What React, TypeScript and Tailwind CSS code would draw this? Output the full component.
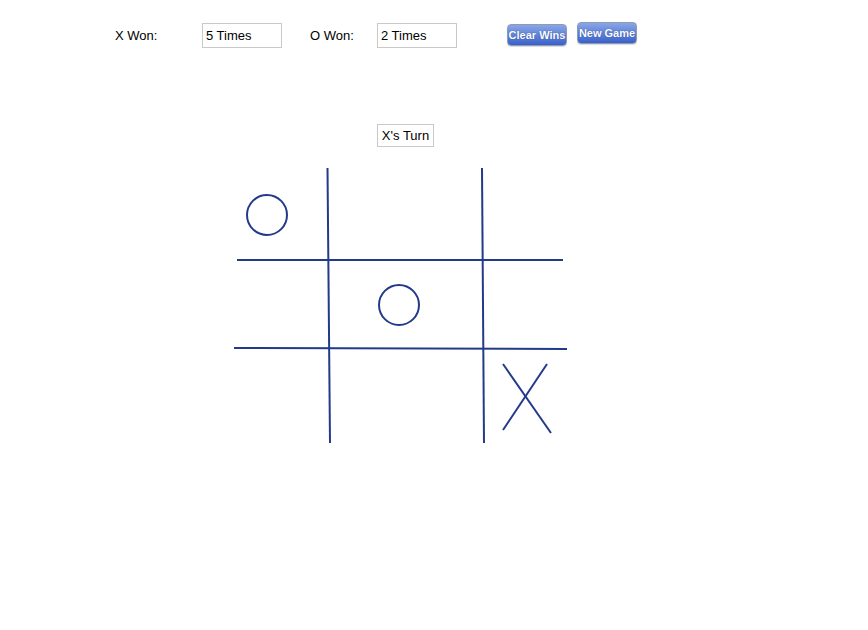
import React from "react";

const ink = "#233a8a";

function Stat({ label, value, labelW }: { label: string; value: string; labelW: string }) {
  return (
    <div className="flex items-center">
      <span className={`${labelW} text-[13px] text-black`}>{label}</span>
      <div className="w-[80px] h-[25px] border border-[#c9c9c9] bg-white pl-[3px] pt-[1px] flex items-center text-[13px] text-black">
        {value}
      </div>
    </div>
  );
}

function Btn({ children, extra }: { children: React.ReactNode; extra: string }) {
  return (
    <button
      className={`w-[60px] h-[22px] rounded-[4px] border border-[#8e9bb5] bg-gradient-to-b from-[#8aa6e6] to-[#3a60c9] text-white text-[11px] font-bold leading-none [text-shadow:0_0_1px_rgba(20,40,120,0.8)] shadow-[0_1px_1px_rgba(0,0,0,0.15)] ${extra}`}
    >
      {children}
    </button>
  );
}

export default function App() {
  return (
    <div className="w-[868px] h-[630px] bg-white font-['Liberation_Sans',Arial,sans-serif]">
      {/* scores + controls */}
      <div className="flex items-start pt-[23px] pl-[115px]">
        <Stat label="X Won:" value="5 Times" labelW="w-[87px]" />
        <div className="w-[28px]" />
        <Stat label="O Won:" value="2 Times" labelW="w-[67px]" />
        <div className="w-[50px]" />
        <Btn extra="mt-[1px]">Clear Wins</Btn>
        <div className="w-[10px]" />
        <Btn extra="-mt-[1px]">New Game</Btn>
      </div>

      {/* turn */}
      <div className="mt-[76px] pl-[377px]">
        <div className="w-[57px] h-[23px] border border-[#c9c9c9] flex items-center justify-center text-[13px] text-black">
          X's Turn
        </div>
      </div>

      {/* board */}
      <div className="mt-[19px] pl-[230px]">
        <svg width="340" height="280" viewBox="230 166 340 280" fill="none" stroke={ink} strokeWidth="2">
          <line x1="327.5" y1="168" x2="330" y2="443" />
          <line x1="482" y1="168" x2="484" y2="443" />
          <line x1="237" y1="260" x2="563" y2="260" />
          <line x1="234" y1="348" x2="567" y2="349" />
          <circle cx="267" cy="215" r="20" />
          <circle cx="399" cy="305" r="20" />
          <line x1="503" y1="364" x2="551" y2="433" />
          <line x1="547" y1="364" x2="503" y2="430" />
        </svg>
      </div>
    </div>
  );
}
